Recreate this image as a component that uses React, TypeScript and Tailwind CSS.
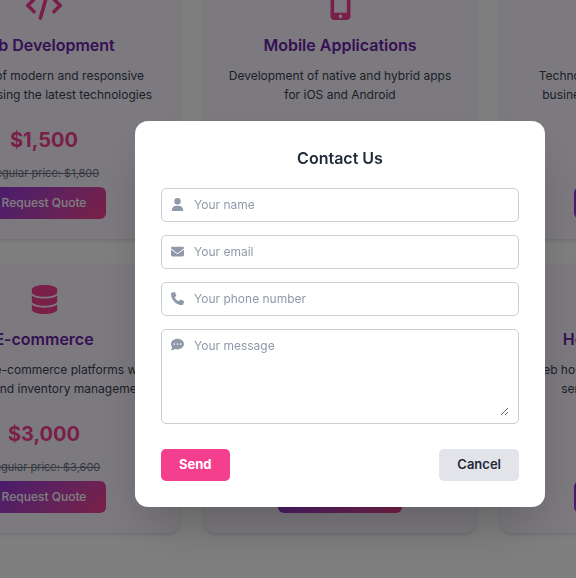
import type { ReactNode } from 'react';
import {
  FaCartShopping,
  FaCommentDots,
  FaDatabase,
  FaEnvelope,
  FaGear,
  FaMobileScreenButton,
  FaPhone,
  FaServer,
  FaUser,
} from 'react-icons/fa6';

type Service = {
  icon: ReactNode;
  title: string;
  lines: [string, string];
  price: string;
  regular: string;
};

const iconSize = 'h-[29px] w-auto';

function CodeIcon() {
  return (
    <svg viewBox="0 0 640 512" fill="currentColor" className="h-[29px] w-9" aria-hidden="true">
      <path d="M392.8 1.2c-17-4.9-34.7 5-39.6 22l-128 448c-4.9 17 5 34.7 22 39.6s34.7-5 39.6-22l128-448c4.9-17-5-34.7-22-39.6zm80.6 120.1c-12.5 12.5-12.5 32.8 0 45.3L562.7 256l-89.4 89.4c-12.5 12.5-12.5 32.8 0 45.3s32.8 12.5 45.3 0l112-112c12.5-12.5 12.5-32.8 0-45.3l-112-112c-12.5-12.5-32.8-12.5-45.3 0zm-306.7 0c-12.5-12.5-32.8-12.5-45.3 0l-112 112c-12.5 12.5-12.5 32.8 0 45.3l112 112c12.5 12.5 32.8 12.5 45.3 0s12.5-32.8 0-45.3L77.3 256l89.4-89.4c12.5-12.5 12.5-32.8 0-45.3z" />
    </svg>
  );
}

const services: Service[] = [
  {
    icon: <CodeIcon />,
    title: 'Web Development',
    lines: ['Creation of modern and responsive', 'websites using the latest technologies'],
    price: '$1,500',
    regular: '$1,800',
  },
  {
    icon: <FaMobileScreenButton className={iconSize} />,
    title: 'Mobile Applications',
    lines: ['Development of native and hybrid apps', 'for iOS and Android'],
    price: '$2,500',
    regular: '$3,000',
  },
  {
    icon: <FaGear className={iconSize} />,
    title: 'IT Consulting',
    lines: ['Technology consulting to optimize', 'business processes and systems'],
    price: '$1,000',
    regular: '$1,200',
  },
  {
    icon: <FaDatabase className={iconSize} />,
    title: 'E-commerce',
    lines: ['Complete e-commerce platforms with', 'payment and inventory management'],
    price: '$3,000',
    regular: '$3,600',
  },
  {
    icon: <FaCartShopping className={iconSize} />,
    title: 'Online Marketing',
    lines: ['Campaigns for search and social', 'to grow your audience'],
    price: '$1,200',
    regular: '$1,500',
  },
  {
    icon: <FaServer className={iconSize} />,
    title: 'Hosting & Domains',
    lines: ['Web hosting and domain registration', 'services for your websites'],
    price: '$1,000',
    regular: '$1,200',
  },
];

function ServiceCard({ service }: { service: Service }) {
  return (
    <article className="flex flex-col items-center rounded-xl bg-[#faf5ff] p-5 text-center shadow-[0_2px_4px_rgba(0,0,0,0.12)]">
      <div className="flex h-[30px] items-center text-[#f43f8e]">{service.icon}</div>
      <h3 className="mt-[13px] text-base leading-6 font-semibold text-[#6b21a8]">{service.title}</h3>
      <p className="mt-[9px] text-xs leading-[19px] text-[#374151]">
        {service.lines[0]}
        <br />
        {service.lines[1]}
      </p>
      <p className="mt-5 text-xl leading-8 font-bold text-[#f43f8e]">{service.price}</p>
      <p className="mt-[9px] text-[11px] leading-4 text-[#6b7280] line-through">Regular price: {service.regular}</p>
      <button
        type="button"
        className="mt-1.5 h-8 rounded-md bg-linear-135 from-[#8a2be2] to-[#f43f8e] px-5 text-xs font-medium text-white"
      >
        Request Quote
      </button>
    </article>
  );
}

type FieldProps = { id: string; icon: ReactNode; label: string; type: string };

function Field({ id, icon, label, type }: FieldProps) {
  return (
    <div className="flex h-[34px] items-center rounded-[5px] border border-[#cbd0d8] px-[9px]">
      <label htmlFor={id} aria-label={label} className="mr-2.5 pb-0.5 text-[13px] text-[#9099a9]">
        {icon}
      </label>
      <input
        id={id}
        type={type}
        placeholder={label}
        className="min-w-0 flex-1 text-xs leading-5 text-[#1f2937] outline-none placeholder:text-[#9099a9]"
      />
    </div>
  );
}

function ContactDialog() {
  return (
    <div className="fixed inset-0 flex items-center justify-center bg-black/50 pt-[50px] pl-[104px]">
      <form
        role="dialog"
        aria-labelledby="contact-title"
        className="w-[410px] rounded-[13px] bg-white p-[26px] shadow-2xl"
        onSubmit={(event) => event.preventDefault()}
      >
        <h2 id="contact-title" className="text-center text-base leading-[22px] font-semibold text-[#1f2937]">
          Contact Us
        </h2>
        <div className="mt-[19px] flex flex-col gap-[13px]">
          <Field id="name" icon={<FaUser className="h-[13px] w-auto" />} label="Your name" type="text" />
          <Field id="email" icon={<FaEnvelope />} label="Your email" type="email" />
          <Field id="phone" icon={<FaPhone />} label="Your phone number" type="tel" />
          <div className="flex h-[95px] items-start rounded-[5px] border border-[#cbd0d8] px-[9px] py-1.5">
            <label htmlFor="message" aria-label="Your message" className="mt-0.5 mr-2.5 text-[13px] text-[#9099a9]">
              <FaCommentDots />
            </label>
            <textarea
              id="message"
              placeholder="Your message"
              className="h-20 min-w-0 flex-1 text-xs leading-5 text-[#1f2937] outline-none placeholder:text-[#9099a9]"
            />
          </div>
        </div>
        <div className="mt-[25px] flex justify-between">
          <button type="submit" className="h-8 rounded-[5px] bg-[#f43f8e] px-[18px] text-[13px] font-bold text-white">
            Send
          </button>
          <button type="button" className="h-8 rounded-[5px] bg-[#e2e4e9] px-[18px] text-[13px] font-semibold text-[#1f2937]">
            Cancel
          </button>
        </div>
      </form>
    </div>
  );
}

export default function App() {
  return (
    <main className="h-screen overflow-hidden bg-white font-['Inter','Liberation_Sans',sans-serif]">
      <section className="-mt-[30px] -ml-[92px] grid w-[864px] grid-cols-3 gap-x-6 gap-y-[25px]">
        {services.map((service) => (
          <ServiceCard key={service.title} service={service} />
        ))}
      </section>
      <ContactDialog />
    </main>
  );
}
